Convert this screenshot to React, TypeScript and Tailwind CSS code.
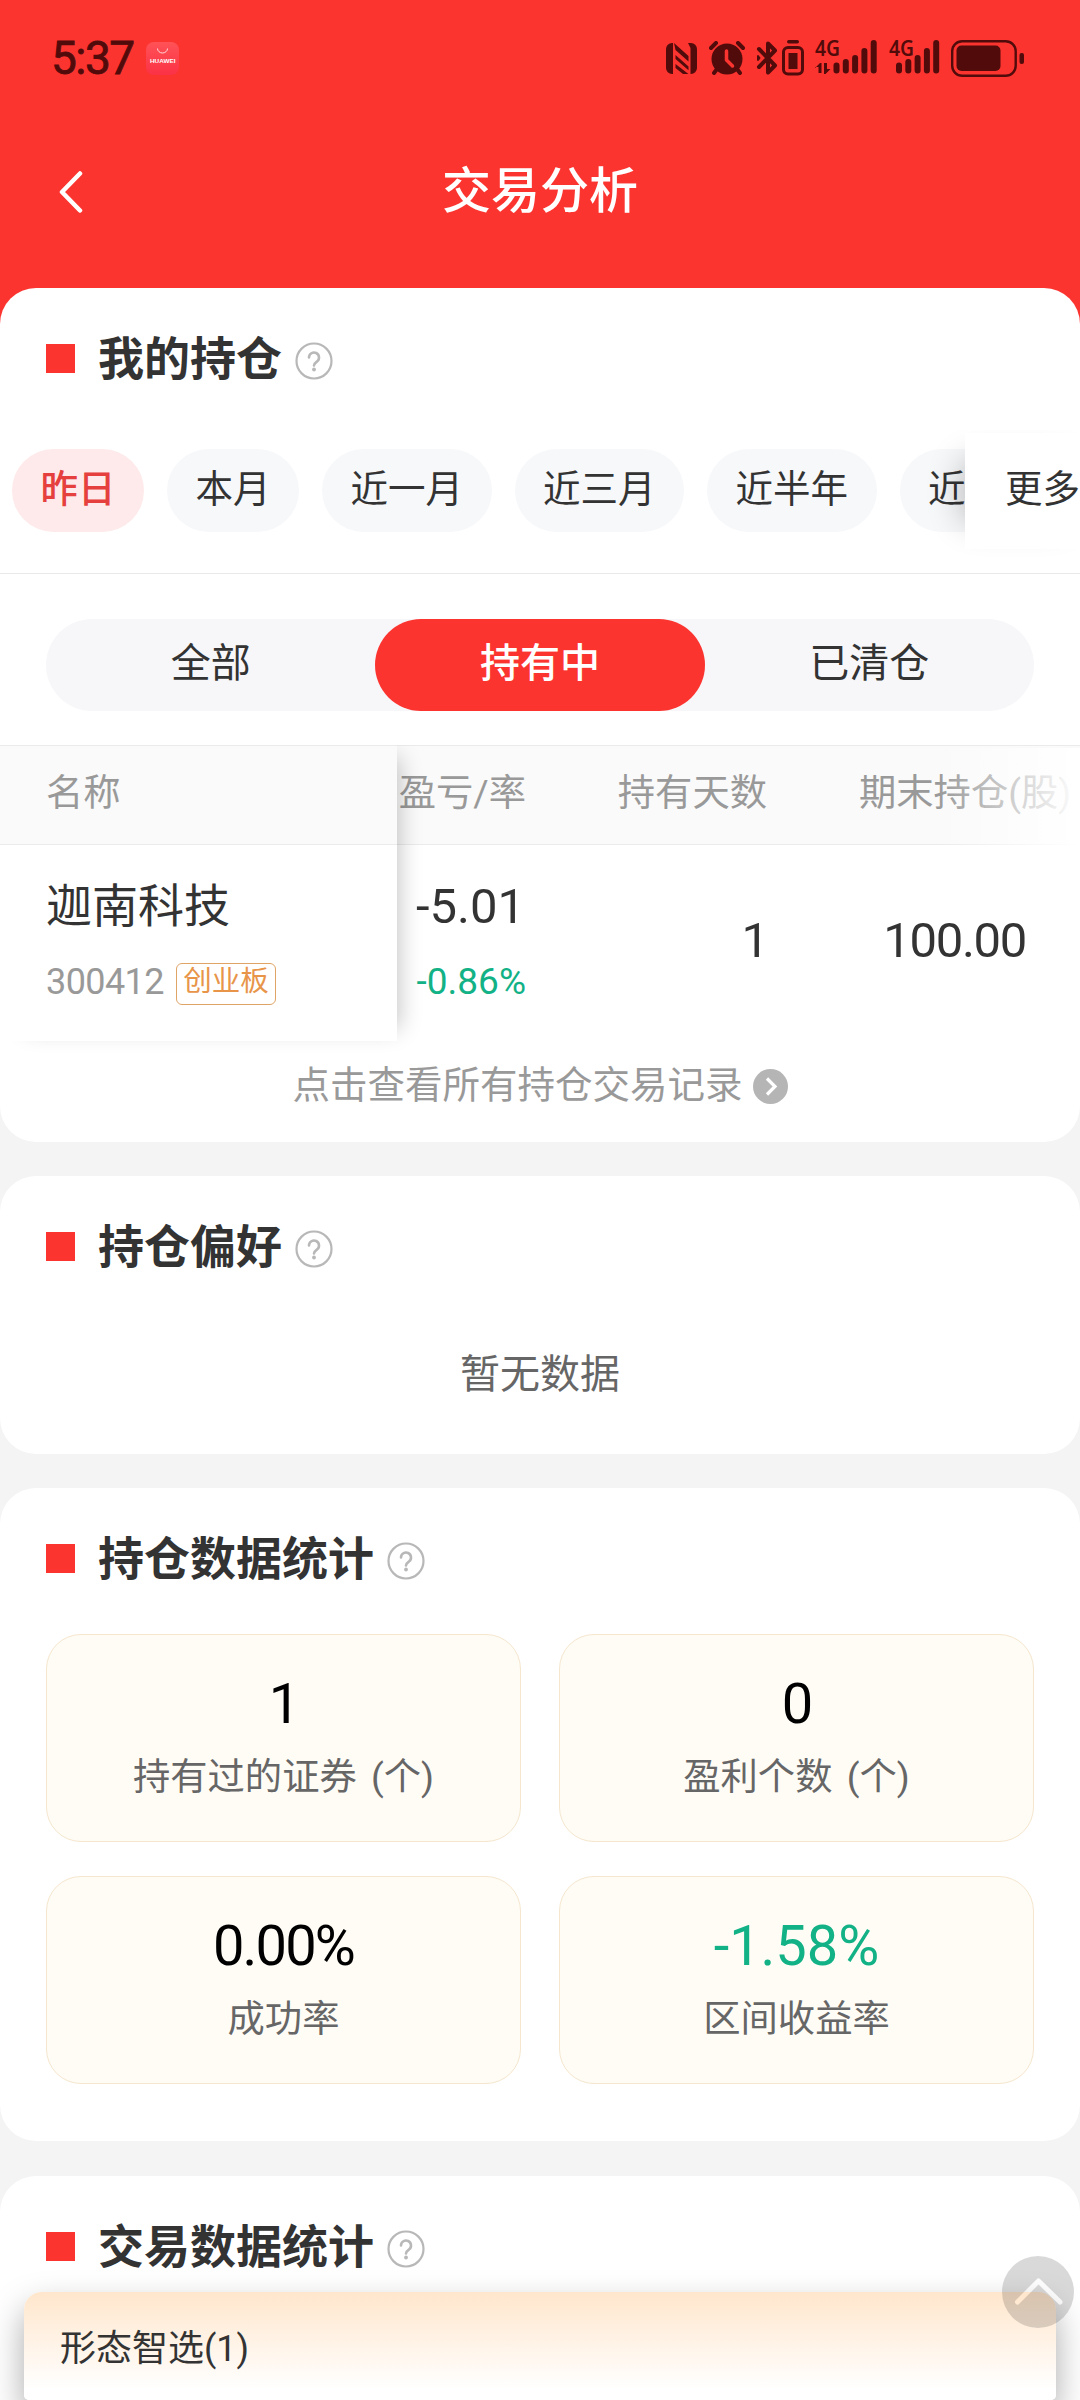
import { ReactNode } from 'react';
import clsx from 'clsx';

const periods = ['昨日', '本月', '近一月', '近三月', '近半年', '近一年'];
const tabs = ['全部', '持有中', '已清仓'];

const stats = [
    { value: '1', label: '持有过的证券 (个)' },
    { value: '0', label: '盈利个数 (个)' },
    { value: '0.00%', label: '成功率' },
    { value: '-1.58%', label: '区间收益率', down: true },
];

function SignalIcon({ data }: { data?: boolean }) {
    const x = data ? 18.5 : 7;
    const tops = [22.5, 19, 15, 8, 0];
    return (
        <svg
            className={clsx('h-[36px] overflow-visible', data ? 'w-[63px]' : 'ml-[11px] w-[52px]')}
            viewBox={data ? '0 0 63 36' : '0 0 52 36'}
            fill="currentColor"
        >
            <text
                x="0"
                y="16"
                fontFamily="'Noto Sans', sans-serif"
                fontSize="21"
                fontWeight="600"
                textLength="25"
                lengthAdjust="spacingAndGlyphs"
            >
                4G
            </text>
            {data && <path d="M0 28l5-5h1.500v10h-3v-6H0zM9 23h3v6h3.500l-5 5H9z" />}
            {tops.map((top, i) => (
                <rect key={top} x={x + i * 9.3} y={top} width="6" height={33.5 - top} rx="3" />
            ))}
        </svg>
    );
}

function StatusBar() {
    return (
        <div className="flex h-[116px] items-center justify-between pr-[56px] pl-[51px] text-[#520b0b]">
            <div className="flex items-center">
                <span className="text-[46px] leading-[50px] tracking-[-1.500px] [-webkit-text-stroke:0.8px_#520b0b]">5:37</span>
                <svg className="ml-[12px] h-[33px] w-[33px]" viewBox="0 0 33 33">
                    <defs>
                        <linearGradient id="store" x1="0" y1="0" x2="0" y2="1">
                            <stop offset="0" stopColor="#ff5257" />
                            <stop offset="1" stopColor="#fb3145" />
                        </linearGradient>
                    </defs>
                    <rect width="33" height="33" rx="8" fill="url(#store)" />
                    <path d="M11.500 6.500a5 4.500 0 0 0 10 0" fill="none" stroke="#ffd9da" strokeWidth="1" />
                    <text
                        x="4"
                        y="21"
                        fill="#fff"
                        fontFamily="'Liberation Sans', sans-serif"
                        fontSize="5.5"
                        fontWeight="700"
                        textLength="25.5"
                        lengthAdjust="spacingAndGlyphs"
                    >
                        HUAWEI
                    </text>
                </svg>
            </div>
            <div className="flex items-center">
                <svg className="h-[31px] w-[31px]" viewBox="0 0 31 31" fill="currentColor">
                    <path d="M6 0h1v31H6a6 6 0 0 1-6-6V6a6 6 0 0 1 6-6zM22 0h3a6 6 0 0 1 6 6v19a6 6 0 0 1-6 6h-.500V5z" />
                    <path d="M8 0l14.500 13v5.500L9.500 7zM9.500 12L22.500 23.500v3.800L9.500 16zM9.500 21l13 10H17L9.500 25z" />
                </svg>
                <svg className="ml-[12px] h-[34px] w-[36px]" viewBox="0 0 36 34" fill="currentColor">
                    <circle cx="18" cy="18" r="15.500" />
                    <g stroke="currentColor" strokeWidth="4" strokeLinecap="round">
                        <path d="M2 7l5-5M34 7l-5-5M8 28l-3 4M28 28l3 4" />
                    </g>
                    <path d="M17.500 10v9l6 6" fill="none" stroke="#fc3430" strokeWidth="3.500" strokeLinecap="round" strokeLinejoin="round" />
                </svg>
                <svg
                    className="ml-[11px] h-[36px] w-[24px]"
                    viewBox="0 0 24 36"
                    fill="none"
                    stroke="currentColor"
                    strokeWidth="4"
                    strokeLinejoin="round"
                    strokeLinecap="round"
                >
                    <path d="M3 9l16 16.500-7 7v-29l7 7L3 27" />
                    <path d="M2 16v4l1.500-2z" strokeWidth="2" />
                </svg>
                <svg className="ml-[2px] h-[36px] w-[22px]" viewBox="0 0 22 36" fill="currentColor">
                    <rect x="5" width="12" height="3.500" rx="1.700" />
                    <rect x="1.500" y="7.500" width="19" height="26.500" rx="4.500" fill="none" stroke="currentColor" strokeWidth="3" />
                    <rect x="6.500" y="13" width="9" height="16" />
                </svg>
                <span className="ml-[11px]">
                    <SignalIcon data />
                </span>
                <SignalIcon />
                <svg className="ml-[10px] h-[37px] w-[73px]" viewBox="0 0 73 37" fill="currentColor">
                    <rect x="1.200" y="1.200" width="63.500" height="34.600" rx="10" fill="none" stroke="currentColor" strokeWidth="2.400" />
                    <rect x="5.500" y="5.500" width="44" height="25.500" rx="5" />
                    <rect x="68.500" y="13" width="4.500" height="11" rx="2" />
                </svg>
            </div>
        </div>
    );
}

function NavBar() {
    return (
        <div className="grid h-[152px] grid-cols-3 items-center px-[58px] text-white">
            <svg
                className="h-[42px] w-[26px]"
                viewBox="0 0 26 42"
                fill="none"
                stroke="currentColor"
                strokeWidth="4.500"
                strokeLinecap="round"
                strokeLinejoin="round"
            >
                <path d="M22 2.500L4 21l18 18.500" />
            </svg>
            <h1 className="text-center text-[49px] leading-[60px] font-medium">交易分析</h1>
        </div>
    );
}

function SectionTitle({ children }: { children: ReactNode }) {
    return (
        <div className="flex h-[142px] items-center pl-[46px]">
            <span className="mb-[1px] size-[29px] bg-[#fc3430]" />
            <h2 className="ml-[23px] text-[46px] leading-[56px] font-bold">{children}</h2>
            <svg className="mt-[4px] ml-[13px] size-[38px]" viewBox="0 0 38 38" fill="none" stroke="#b8b8b8" strokeLinecap="round">
                <circle cx="19" cy="19" r="17.500" strokeWidth="2.200" />
                <path d="M14 15.500a5 5 0 1 1 8 4c-2 1.500-3 2.200-3 4" strokeWidth="2.600" />
                <circle cx="19" cy="27.500" r="1.900" fill="#b8b8b8" stroke="none" />
            </svg>
        </div>
    );
}

function PeriodFilter() {
    return (
        <div className="relative flex h-[144px] gap-[23px] overflow-hidden border-b border-[#e9e9e9] pt-[19px] pl-[12px]">
            {periods.map((period, i) => (
                <span
                    key={period}
                    className={clsx(
                        'h-[83px] shrink-0 rounded-full px-[28.500px] text-[37.500px] leading-[80px]',
                        i === 0 ? 'bg-[#feeaea] font-medium text-[#e5403e]' : 'bg-[#f7f8fa]',
                    )}
                >
                    {period}
                </span>
            ))}
            <span className="absolute top-[3px] left-[965px] h-[116px] w-[160px] bg-white pl-[40px] text-[37.500px] leading-[113px] whitespace-nowrap shadow-[-30px_0_36px_-30px_rgba(0,0,0,0.32)]">
                更多
            </span>
        </div>
    );
}

function HoldingTabs() {
    return (
        <div className="mx-[46px] mt-[45px] grid h-[92px] grid-cols-3 rounded-full bg-[#f7f7fa]">
            {tabs.map((tab) => (
                <span
                    key={tab}
                    className={clsx(
                        'rounded-full text-center text-[40px] leading-[90px]',
                        tab === '持有中' && 'bg-[#fc3430] font-medium text-white',
                    )}
                >
                    {tab}
                </span>
            ))}
        </div>
    );
}

function HoldingTable() {
    return (
        <div className="mt-[34px] flex h-[316px] overflow-hidden">
            <div className="z-10 h-[296px] w-[397px] shrink-0 bg-white shadow-[14px_0_22px_-12px_rgba(0,0,0,0.24)]">
                <div className="h-[100px] border-y border-[#ebebeb] bg-[#fafafa] pl-[46px] text-[37.300px] leading-[95px] text-[#999]">
                    名称
                </div>
                <div className="pt-[31px] pl-[46px]">
                    <div className="text-[46px] leading-[60px]">迦南科技</div>
                    <div className="mt-[24px] flex h-[44px] items-center">
                        <span className="text-[36px] leading-[44px] tracking-[-0.600px] text-[#999]">300412</span>
                        <span className="mt-[3px] ml-[12px] h-[42px] rounded-[6px] border border-[#e0a566] px-[6.500px] text-[28.500px] leading-[36px] text-[#e8954a]">
                            创业板
                        </span>
                    </div>
                </div>
            </div>
            <div className="flex-1">
                <div className="relative flex h-[100px] border-y border-[#ebebeb] bg-[#fafafa] text-[37.300px] leading-[95px] whitespace-nowrap text-[#999]">
                    <span className="w-[129px] text-right">盈亏/率</span>
                    <span className="w-[241px] text-right">持有天数</span>
                    <span className="pl-[92px]">期末持仓(股)</span>
                    <span className="absolute top-[2px] right-0 h-[97px] w-[144px] bg-gradient-to-r from-white/0 to-white" />
                </div>
                <div className="flex h-[196px] items-center text-[49px] leading-[60px]">
                    <div className="flex h-full w-[129px] flex-col items-end pt-[32px]">
                        <span className="pr-[1px]">-5.01</span>
                        <span className="mt-[23px] text-[37px] leading-[44px] text-[#12b286]">-0.86%</span>
                    </div>
                    <span className="mb-[4px] w-[243px] text-right">1</span>
                    <span className="mb-[4px] w-[258px] pr-[1px] text-right tracking-[-1.300px]">100.00</span>
                </div>
            </div>
        </div>
    );
}

function StatCard({ value, label, down }: { value: string; label: string; down?: boolean }) {
    return (
        <div className="h-[208px] rounded-[35px] border border-[#f5e6cd] bg-[#fffcf6] pt-[38px] text-center">
            <div className={clsx('text-[56px] leading-[62px]', down ? 'text-[#12b286]' : 'tracking-[-1.800px] text-black')}>{value}</div>
            <div className="mt-[12px] text-[37.300px] leading-[60px] text-[#666] [word-spacing:5px]">{label}</div>
        </div>
    );
}

function BackToTop() {
    return (
        <svg className="absolute top-[2256px] left-[1002px] size-[72px]" viewBox="0 0 72 72">
            <mask id="arrow">
                <rect width="72" height="72" fill="#fff" />
                <path d="M15.500 46L36.500 25l21.500 21" fill="none" stroke="#000" strokeWidth="5" strokeLinecap="round" strokeLinejoin="round" />
            </mask>
            <circle cx="36" cy="36" r="36" fill="#000" fillOpacity="0.15" mask="url(#arrow)" />
        </svg>
    );
}

export default function App() {
    return (
        <div className="relative h-[2400px] w-[1080px] overflow-hidden bg-[#f4f4f4] font-[Roboto,'Noto_Sans_CJK_SC',sans-serif] text-[#333]">
            <header className="h-[330px] bg-[#fc3430]">
                <StatusBar />
                <NavBar />
            </header>
            <main className="-mt-[42px] flex flex-col gap-[34px]">
                <section className="h-[854px] overflow-hidden rounded-[36px] bg-white">
                    <SectionTitle>我的持仓</SectionTitle>
                    <PeriodFilter />
                    <HoldingTabs />
                    <HoldingTable />
                    <div className="mt-[4px] flex h-[40px] items-center justify-center gap-[10px] text-[37.500px] leading-[40px] text-[#999]">
                        点击查看所有持仓交易记录
                        <svg className="mt-[3px] size-[35px]" viewBox="0 0 35 35">
                            <circle cx="17.500" cy="17.500" r="17.500" fill="#b5b5b5" />
                            <path d="M14 9.500l8 8-8 8" fill="none" stroke="#fff" strokeWidth="3.200" />
                        </svg>
                    </div>
                </section>
                <section className="h-[278px] rounded-[36px] bg-white">
                    <SectionTitle>持仓偏好</SectionTitle>
                    <p className="mt-[27px] text-center text-[40px] leading-[60px] text-[#666]">暂无数据</p>
                </section>
                <section className="h-[653px] rounded-[36px] bg-white">
                    <SectionTitle>持仓数据统计</SectionTitle>
                    <div className="mt-[4px] grid grid-cols-2 gap-x-[38px] gap-y-[34px] px-[46px]">
                        {stats.map((stat) => (
                            <StatCard key={stat.label} {...stat} />
                        ))}
                    </div>
                </section>
                <section className="mt-[1px] h-[300px] rounded-[36px] bg-white">
                    <SectionTitle>交易数据统计</SectionTitle>
                </section>
            </main>
            <div className="absolute top-[2292px] left-[24px] h-[108px] w-[1032px] rounded-t-[18px] rounded-b-[5px] bg-gradient-to-b from-[#ffe6cc] to-white to-90% pl-[36px] text-[36px] leading-[114px] shadow-[0_16px_34px_rgba(0,0,0,0.34)]">
                形态智选(1)
            </div>
            <BackToTop />
        </div>
    );
}
